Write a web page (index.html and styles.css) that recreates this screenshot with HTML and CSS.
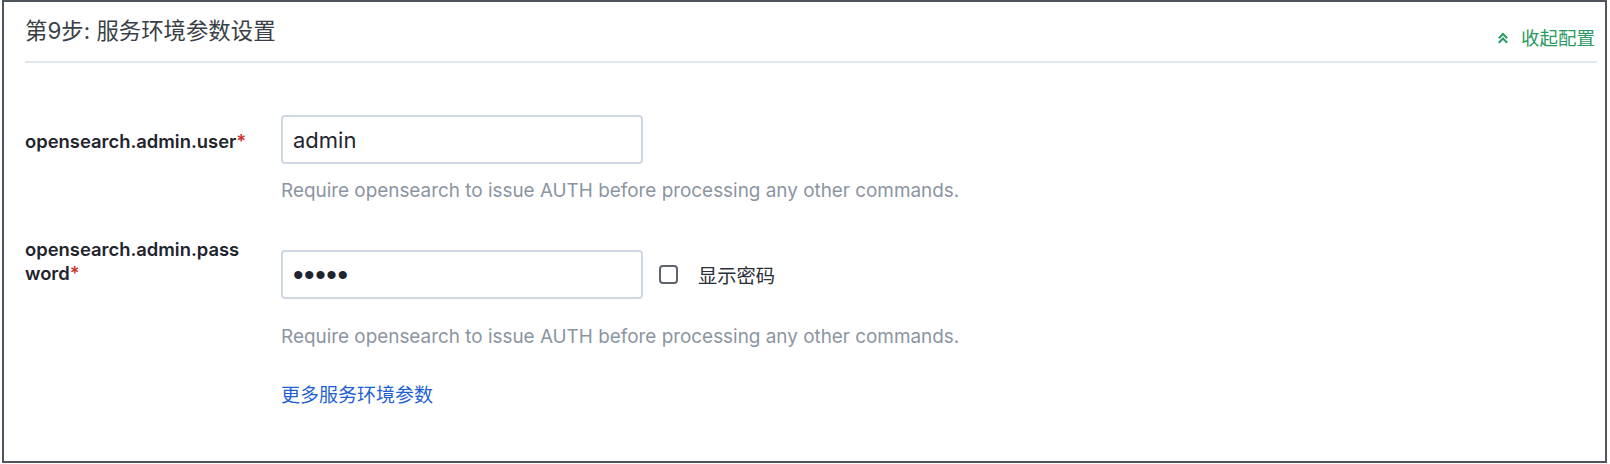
FILE: index.html
```html
<!DOCTYPE html>
<html lang="zh-CN">
<head>
<meta charset="utf-8">
<title>服务环境参数设置</title>
<link rel="stylesheet" href="styles.css">
</head>
<body>
<div class="card">
  <div class="header">
    <div class="title">第9步: 服务环境参数设置</div>
    <a class="collapse" href="#">
      <svg class="chev" width="12" height="12" viewBox="0 0 12 12" aria-hidden="true">
        <polyline points="1.8,6.2 6,2 10.2,6.2" fill="none" stroke="currentColor" stroke-width="2"/>
        <polyline points="1.8,10.7 6,6.5 10.2,10.7" fill="none" stroke="currentColor" stroke-width="2"/>
      </svg>
      <span>收起配置</span>
    </a>
  </div>
  <div class="form">
    <div class="row">
      <label class="label">opensearch.admin.user<span class="req">*</span></label>
      <div class="field">
        <div class="control">
          <div class="input">admin</div>
        </div>
        <div class="help help-1">Require opensearch to issue AUTH before processing any other commands.</div>
      </div>
    </div>
    <div class="row row-2">
      <label class="label label-wrap">opensearch.admin.pass<br>word<span class="req">*</span></label>
      <div class="field field-2">
        <div class="control">
          <div class="input dots">•••••</div>
          <span class="check"><span class="box"></span><span class="check-text">显示密码</span></span>
        </div>
        <div class="help help-2">Require opensearch to issue AUTH before processing any other commands.</div>
        <a class="more" href="#">更多服务环境参数</a>
      </div>
    </div>
  </div>
</div>
</body>
</html>
```
FILE: styles.css
```css
html, body {
  margin: 0;
  padding: 0;
}
body {
  font-family: Inter, "Noto Sans CJK SC", sans-serif;
  width: 1610px;
  height: 464px;
  background: #ffffff;
}
.card {
  margin-left: 2px;
  width: 1605px;
  height: 463px;
  box-sizing: border-box;
  border: 2px solid #50545d;
  background: #fff;
  padding: 0 8px 0 21px;
}
.header {
  display: flex;
  justify-content: space-between;
  align-items: flex-start;
  height: 59px;
  border-bottom: 2px solid #dfe7ef;
}
.title {
  margin-top: 16px;
  font-size: 22.4px;
  line-height: 26px;
  color: #3a3f47;
}
.collapse {
  margin-top: 25px;
  margin-right: 2px;
  display: flex;
  align-items: center;
  gap: 12px;
  color: #2a9a62;
  text-decoration: none;
  font-size: 18.5px;
  line-height: 22px;
}
.chev {
  display: block;
}
.form {
  padding-top: 52px;
}
.row {
  display: grid;
  grid-template-columns: 256px 1fr;
  align-items: start;
}
.label {
  margin-top: 14px;
  font-size: 18.4px;
  line-height: 24px;
  font-weight: 600;
  color: #1f242d;
}
.row-2 {
  margin-top: 36px;
}
.label-wrap {
  margin-top: 0;
  line-height: 23.5px;
}
.field-2 {
  padding-top: 12px;
}
.req {
  color: #d0312d;
}
.control {
  display: flex;
  align-items: center;
}
.input {
  width: 362px;
  height: 49px;
  box-sizing: border-box;
  border: 2px solid #cfd8e2;
  border-radius: 4px;
  padding: 0 10px;
  display: flex;
  align-items: center;
  font-size: 22px;
  color: #1f2530;
}
.dots {
  font-family: "Liberation Sans", sans-serif;
  font-size: 30px;
  letter-spacing: 0.6px;
  color: #1f2530;
}
.check {
  display: flex;
  align-items: center;
  margin-left: 16px;
}
.box {
  width: 19px;
  height: 19px;
  box-sizing: border-box;
  border: 2px solid #5f636b;
  border-radius: 4px;
}
.check-text {
  margin-left: 20px;
  font-size: 19.3px;
  color: #2a2f37;
}
.help {
  font-size: 18.9px;
  line-height: 22px;
  color: #8b95a1;
}
.help-1 {
  margin-top: 16px;
}
.help-2 {
  margin-top: 27px;
}
.more {
  display: block;
  margin-top: 37px;
  font-size: 19px;
  line-height: 22px;
  color: #1e5fd4;
  text-decoration: none;
}
```
